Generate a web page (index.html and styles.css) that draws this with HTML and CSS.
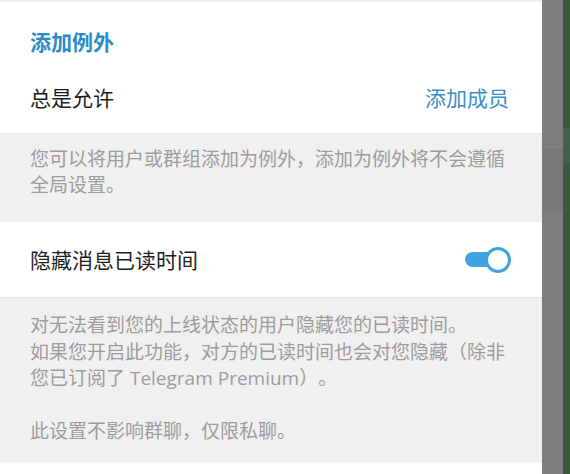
FILE: index.html
```html
<!DOCTYPE html>
<html lang="zh-CN">
<head>
<meta charset="utf-8">
<title>隐私设置</title>
<link rel="stylesheet" href="styles.css">
</head>
<body>
<div class="screen">
  <main class="panel">
    <section class="card card-top">
      <div class="section-title">添加例外</div>
      <div class="row">
        <span class="row-label">总是允许</span>
        <span class="row-link">添加成员</span>
      </div>
    </section>
    <div class="note note-first">您可以将用户或群组添加为例外，添加为例外将不会遵循全局设置。</div>
    <section class="card card-toggle">
      <div class="row row-toggle">
        <span class="row-label">隐藏消息已读时间</span>
        <span class="toggle on"><span class="knob"></span></span>
      </div>
    </section>
    <div class="note note-second">对无法看到您的上线状态的用户隐藏您的已读时间。<br>如果您开启此功能，对方的已读时间也会对您隐藏（除非您已订阅了 Telegram Premium）。<br><br>此设置不影响群聊，仅限私聊。</div>
    <section class="card card-bottom"></section>
  </main>
  <div class="dim-strip">
    <div class="dim-band"></div>
  </div>
  <div class="backdrop">
    <div class="backdrop-mark"></div>
  </div>
</div>
</body>
</html>
```

FILE: styles.css
```css
html, body {
  margin: 0;
  padding: 0;
  height: 100%;
}

body {
  font-family: "Open Sans", "Noto Sans CJK SC", sans-serif;
  background: #3e563e;
  overflow: hidden;
  text-spacing-trim: space-all;
}

.screen {
  display: flex;
  height: 474px;
}

.panel {
  width: 542px;
  flex: none;
  background: #f0f0f0;
  padding-top: 2px;
  display: flex;
  flex-direction: column;
}

.card {
  background: #ffffff;
}

.card-top {
  padding: 26px 0 21px;
  box-shadow: 0 1px 0 #e4e4e4;
}

.section-title {
  padding: 0 30px;
  font-size: 21px;
  line-height: 28px;
  font-weight: 700;
  color: #2a8bcb;
}

.row {
  display: flex;
  align-items: center;
  justify-content: space-between;
  padding: 0 31px 0 30px;
}

.card-top .row {
  margin-top: 28px;
  height: 28px;
  padding-right: 33px;
}

.row-label {
  font-size: 21px;
  line-height: 28px;
  color: #1e1e1e;
}

.row-link {
  font-size: 21px;
  line-height: 28px;
  color: #3a8fc6;
}

.note {
  padding: 0 30px;
  font-size: 19px;
  color: #9c9c9c;
}

.note-first {
  line-height: 26px;
  padding-top: 13px;
  height: 52px;
  padding-bottom: 24px;
}

.card-toggle {
  height: 75px;
  display: flex;
  flex-direction: column;
  justify-content: center;
  box-shadow: 0 1px 0 #e4e4e4;
}

.row-toggle {
  height: 75px;
}

.toggle {
  position: relative;
  width: 46px;
  height: 26px;
  flex: none;
}

.toggle::before {
  content: "";
  position: absolute;
  left: 0;
  top: 5px;
  width: 40px;
  height: 15px;
  border-radius: 8px;
  background: #40a3e2;
}

.toggle .knob {
  position: absolute;
  right: 0;
  top: 0;
  width: 20px;
  height: 20px;
  border: 3px solid #40a3e2;
  border-radius: 50%;
  background: #ffffff;
}

.note-second {
  line-height: 26.5px;
  padding-top: 15px;
  height: 132.5px;
  padding-bottom: 17.5px;
}

.card-bottom {
  flex: 1;
  border-top: 1px solid #f6f6f6;
}

.dim-strip {
  width: 21px;
  flex: none;
  background: #7e7e7e;
  display: flex;
  flex-direction: column;
  padding-top: 147px;
}

.dim-band {
  height: 63px;
  background: #797979;
  border-top: 1px solid #858585;
}

.backdrop {
  flex: 1;
  background: #3e573e;
  padding-top: 128px;
}

.backdrop-mark {
  height: 35px;
  background: #46604a;
}
```
